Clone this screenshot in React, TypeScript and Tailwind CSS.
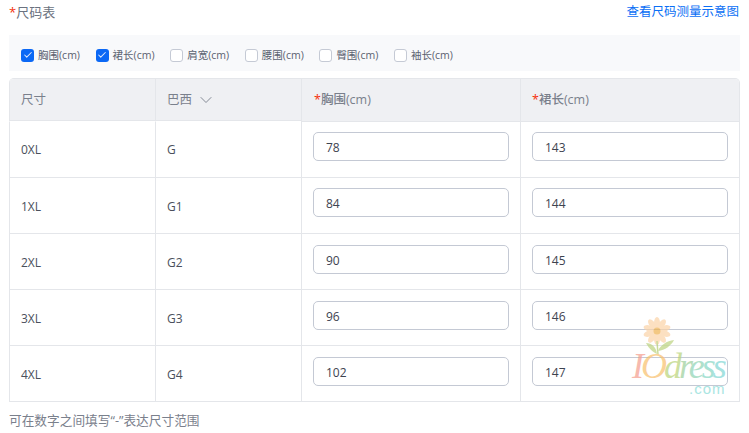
import { Check, ChevronDown } from 'lucide-react'

const font = { fontFamily: '"Open Sans", "Noto Sans CJK SC", sans-serif' }

const filters = [
  { label: '胸围(cm)', checked: true },
  { label: '裙长(cm)', checked: true },
  { label: '肩宽(cm)', checked: false },
  { label: '腰围(cm)', checked: false },
  { label: '臀围(cm)', checked: false },
  { label: '袖长(cm)', checked: false },
]

const rows = [
  { size: '0XL', br: 'G', chest: '78', len: '143' },
  { size: '1XL', br: 'G1', chest: '84', len: '144' },
  { size: '2XL', br: 'G2', chest: '90', len: '145' },
  { size: '3XL', br: 'G3', chest: '96', len: '146' },
  { size: '4XL', br: 'G4', chest: '102', len: '147' },
]

function Required() {
  return <span className="text-[#f5300a] font-normal">*</span>
}

function Filter({ label, checked }: { label: string; checked: boolean }) {
  return (
    <label className="flex w-[74.6px] shrink-0 items-center gap-[4px]">
      {checked ? (
        <span className="flex h-[13px] w-[13px] items-center justify-center rounded-[3px] bg-[#0b68f5]">
          <Check size={10} strokeWidth={2.5} className="text-[#dfe8fb]" />
        </span>
      ) : (
        <span className="h-[13px] w-[13px] rounded-[3px] border border-[#c5cad5] bg-white" />
      )}
      <span className="text-[10.5px] leading-[14px] text-[#5b6270]">{label}</span>
    </label>
  )
}

function Cell({ children, index }: { children: React.ReactNode; index: number }) {
  return (
    <div
      className={
        index === 0
          ? 'flex h-[56px] items-center border-t border-l border-[#e4e6ea] border-t-white pl-[11px] text-[12px] text-[#4a505c]'
          : 'flex h-[56px] items-center border-t border-l border-[#e4e6ea] pl-[11px] pt-[2px] text-[12px] text-[#4a505c]'
      }
    >
      {children}
    </div>
  )
}

function InputCell({ value, index }: { value: string; index: number }) {
  return (
    <div
      className={
        index < 2
          ? 'h-[56px] border-t border-l border-[#e4e6ea] px-[11px] pt-[10px]'
          : 'h-[56px] border-t border-l border-[#e4e6ea] px-[11px] pt-[11px]'
      }
    >
      <div className="flex h-[29px] w-full items-center rounded-[5px] border border-[#c4c9d4] bg-white pl-[12px] pt-[2px] text-[12px] text-[#3d4350]">
        {value}
      </div>
    </div>
  )
}

function Watermark() {
  return (
    <div className="pointer-events-none absolute left-[632px] top-[317px] h-[80px] w-[100px] opacity-70">
      <svg className="absolute left-[8px] top-0" width="40" height="48" viewBox="0 0 40 48">
        {[0, 36, 72, 108, 144, 180, 216, 252, 288, 324].map((a) => (
          <ellipse key={a} cx="17" cy="6" rx="3" ry="6" fill="#fbd3a8" transform={`rotate(${a} 17 14)`} />
        ))}
        <circle cx="17" cy="14" r="3.5" fill="#eeb24f" />
        <path d="M17 24 L18 38" stroke="#b5cd72" strokeWidth="1.5" fill="none" />
        <path d="M17 37 C 13 35 9 32 6 26 C 12 26 16 30 17 37 Z" fill="#bcd37f" />
        <path d="M18 34 C 20 28 27 24 34 23 C 31 29 25 33 18 34 Z" fill="#bcd37f" />
      </svg>
      <div
        className="absolute left-0 top-[29px] whitespace-nowrap text-[36px] italic leading-[40px] tracking-[-3px]"
        style={{ fontFamily: '"Liberation Serif", serif' }}
      >
        <span className="text-[#f59c8c]">I</span>
        <span className="text-[#f9c06c]">O</span>
        <span className="text-[#b9d378]">d</span>
        <span className="text-[#9ccf9c]">r</span>
        <span className="text-[#8fd4b4]">e</span>
        <span className="text-[#85d6c4]">s</span>
        <span className="text-[#80d6d4]">s</span>
      </div>
      <div
        className="absolute left-[57px] top-[64px] text-[15px] leading-[16px] tracking-[1px] text-[#86dbd6]"
        style={{ fontFamily: '"Liberation Sans", sans-serif' }}
      >
        .com
      </div>
    </div>
  )
}

export default function App() {
  return (
    <div className="relative h-[433px] w-[749px] overflow-hidden bg-white" style={font}>
      <div className="flex h-[35px] items-start justify-between pl-[9px] pr-[10px] pt-[3px]">
        <div className="text-[13px] leading-[18px] text-[#6b7280]">
          <Required />
          尺码表
        </div>
        <a className="text-[12.5px] leading-[18px] text-[#0b6ff5]">查看尺码测量示意图</a>
      </div>

      <div className="mx-[9px] flex h-[36px] w-[731px] items-center bg-[#f8f9fb] pl-[12px] pt-[4px]">
        {filters.map((f) => (
          <Filter key={f.label} label={f.label} checked={f.checked} />
        ))}
      </div>

      <div className="ml-[9px] mt-[7px] w-[731px] overflow-hidden rounded-t-[5px] border-r border-b border-t border-[#e4e6ea]">
        <div className="grid grid-cols-[146px_146px_219px_219px]">
          <div className="flex h-[42px] items-center border-b border-l border-[#e4e6ea] bg-[#eff0f3] pl-[11px] pt-[1px] text-[12.5px] text-[#7a808c]">
            尺寸
          </div>
          <div className="flex h-[42px] items-center gap-[4px] border-b border-l border-[#e4e6ea] bg-[#eff0f3] pl-[11px] pt-[1px] text-[12.5px] text-[#7a808c]">
            巴西
            <ChevronDown size={20} strokeWidth={1.1} />
          </div>
          <div className="flex h-[42px] items-center border-l border-[#e4e6ea] bg-[#eff0f3] pl-[12px] pt-[1px] text-[12.5px] font-medium text-[#7a808c]">
            <Required />
            胸围(cm)
          </div>
          <div className="flex h-[42px] items-center border-l border-[#e4e6ea] bg-[#eff0f3] pl-[11px] pt-[1px] text-[12.5px] font-medium text-[#7a808c]">
            <Required />
            裙长(cm)
          </div>
          {rows.map((r, i) => (
            <div key={r.size} className="contents">
              <Cell index={i}>{r.size}</Cell>
              <Cell index={i}>{r.br}</Cell>
              <InputCell value={r.chest} index={i} />
              <InputCell value={r.len} index={i} />
            </div>
          ))}
        </div>
      </div>

      <div className="ml-[9px] mt-[9px] text-[12.7px] leading-[18px] text-[#7a808c]">可在数字之间填写“-”表达尺寸范围</div>

      <Watermark />
    </div>
  )
}
